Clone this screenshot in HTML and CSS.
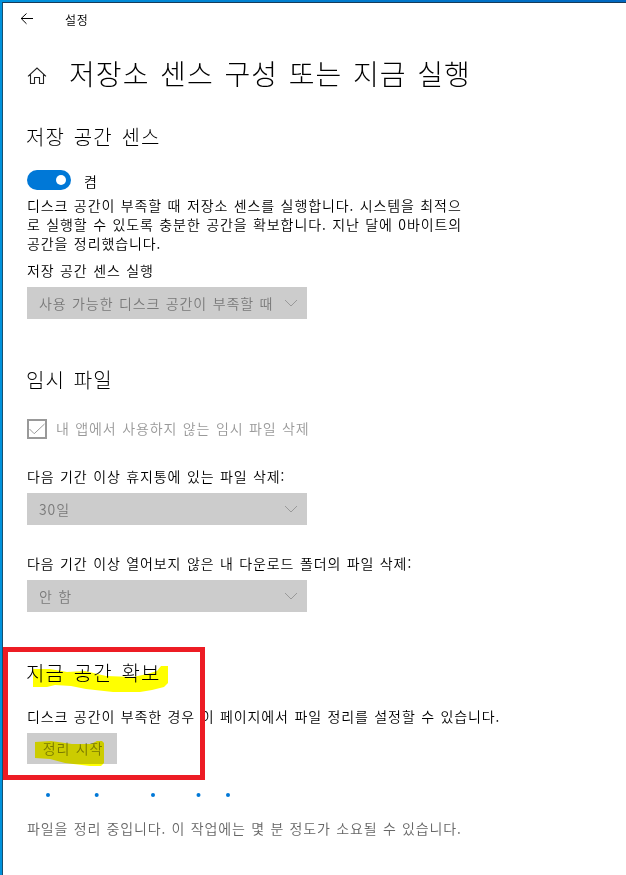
FILE: index.html
```
<!DOCTYPE html>
<html lang="ko">
	<head>
		<meta charset="UTF-8" />
		<meta name="viewport" content="width=device-width, initial-scale=1.0" />
		<title>설정</title>
		<link rel="stylesheet" href="styles.css">
	</head>
	<body>
		<div class="window">
			<header class="titlebar">
				<svg class="back" width="14" height="12" viewBox="0 0 14 12">
					<path d="M13 5.5H1M6.5 .5L1.2 5.5l5.3 5.3" />
				</svg>
				<span>설정</span>
			</header>

			<div class="page-title">
				<svg class="home" width="20" height="18" viewBox="0 0 20 18">
					<path d="M1 9.3L10 1l9 8.3M3.5 7.5v9h4v-6h5v6h4v-9" />
				</svg>
				<h1>저장소 센스 구성 또는 지금 실행</h1>
			</div>

			<main>
				<section class="sense">
					<h2>저장 공간 센스</h2>
					<div class="toggle-row">
						<span class="toggle"></span>
						<span>켬</span>
					</div>
					<p>디스크 공간이 부족할 때 저장소 센스를 실행합니다. 시스템을 최적으<br>로 실행할 수 있도록 충분한 공간을 확보합니다. 지난 달에 0바이트의<br>공간을 정리했습니다.</p>
					<div class="label">저장 공간 센스 실행</div>
					<div class="select">
						<span>사용 가능한 디스크 공간이 부족할 때</span>
						<svg width="14" height="8" viewBox="0 0 14 8"><path d="M1 1l6 6 6-6" /></svg>
					</div>
				</section>

				<section class="temp">
					<h2>임시 파일</h2>
					<div class="check-row">
						<svg width="20" height="20" viewBox="0 0 20 20">
							<rect x="1" y="1" width="18" height="18" stroke-width="2" />
							<path d="M2.5 10l4.7 4.7L17.5 5" />
						</svg>
						<span>내 앱에서 사용하지 않는 임시 파일 삭제</span>
					</div>
					<div class="label">다음 기간 이상 휴지통에 있는 파일 삭제:</div>
					<div class="select">
						<span>30일</span>
						<svg width="14" height="8" viewBox="0 0 14 8"><path d="M1 1l6 6 6-6" /></svg>
					</div>
					<div class="label downloads">다음 기간 이상 열어보지 않은 내 다운로드 폴더의 파일 삭제:</div>
					<div class="select">
						<span>안 함</span>
						<svg width="14" height="8" viewBox="0 0 14 8"><path d="M1 1l6 6 6-6" /></svg>
					</div>
				</section>

				<section class="cleanup">
					<h2>지금 공간 확보</h2>
					<p>디스크 공간이 부족한 경우 이 페이지에서 파일 정리를 설정할 수 있습니다.</p>
					<button disabled>정리 시작</button>
					<svg class="progress" width="210" height="6" viewBox="0 0 210 6">
						<circle cx="21" cy="3" r="2" />
						<circle cx="69.7" cy="3" r="2" />
						<circle cx="126" cy="3" r="2" />
						<circle cx="171.5" cy="3" r="2" />
						<circle cx="201" cy="3" r="2" />
					</svg>
					<p class="working">파일을 정리 중입니다. 이 작업에는 몇 분 정도가 소요될 수 있습니다.</p>

					<!-- marker strokes and frame over the section -->
					<svg class="marker" width="202" height="133" viewBox="0 0 202 133">
						<path d="M30 22L47 22 64 25 82 24 103 29 130 30 144 27 154 24 158 19 165 19V36L161 40 149 43 137 45H110L83 42 68 39 52 38 44 40H30z" />
						<path d="M32 95L48 94 69 97 88 97 94 94H99L101 96V116L98 119 87 119 62 116 47 112 32 111z" />
					</svg>
					<div class="frame"></div>
				</section>
			</main>
		</div>
	</body>
</html>
```
FILE: styles.css
```
:root {
	--accent: #0078d7;
	--disabled-bg: #cccccc;
	--disabled-text: #7a7a7a;
}

* {
	box-sizing: border-box;
}

body {
	margin: 0;
	height: 875px;
	padding: 2px 0 0 2px;
	overflow: hidden;
	background: linear-gradient(to right, #0092dc, #0067c0);
	color: #000;
	font-family: "Noto Sans CJK KR", sans-serif;
	font-size: 14px;
	font-weight: 350;
	line-height: 19px;
	letter-spacing: 0.9px;
	word-spacing: 0.7px;
}

.window {
	height: 873px;
	border-top: 1px solid #173b59;
	border-left: 1px solid #17506f;
	background: #fff;
}

h1,
h2,
p {
	margin: 0;
	white-space: nowrap;
}

h1,
h2 {
	font-weight: 300;
}

svg {
	display: block;
	fill: none;
	stroke: currentColor;
}

.titlebar {
	display: flex;
	align-items: center;
	gap: 31px;
	height: 32px;
	padding-left: 17px;
	font-size: 12px;
	letter-spacing: 0.7px;
}

.back {
	margin-top: -1px;
}

.page-title {
	display: flex;
	align-items: center;
	gap: 22px;
	height: 40px;
	margin-top: 18px;
	padding-left: 24px;
}

.home {
	margin-top: 5px;
	stroke: #222;
	stroke-width: 1.1;
}

h1 {
	font-size: 28px;
	line-height: 40px;
	letter-spacing: 1.1px;
	word-spacing: 1.6px;
}

main {
	padding: 30px 0 0 24px;
}

h2 {
	margin-left: -1px;
	font-size: 20px;
	line-height: 28px;
	letter-spacing: 1.2px;
	word-spacing: 1.7px;
}

.toggle-row {
	display: flex;
	gap: 13px;
	height: 20px;
	margin: 19px 0 6px;
	line-height: 22px;
}

.toggle {
	width: 44px;
	height: 20px;
	padding: 5px 5px 5px 29px;
	border-radius: 10px;
	background: var(--accent);
}

.toggle::after {
	content: "";
	display: block;
	width: 10px;
	height: 10px;
	border-radius: 50%;
	background: #fff;
}

.label {
	margin: 8px 0 7px;
}

.select {
	display: flex;
	align-items: center;
	justify-content: space-between;
	width: 280px;
	height: 32px;
	padding: 0 9px 0 12px;
	background: var(--disabled-bg);
	color: var(--disabled-text);
	white-space: nowrap;
}

.select svg {
	stroke: #999;
}

.temp {
	margin-top: 47px;
}

.check-row {
	display: flex;
	gap: 9px;
	height: 20px;
	margin: 25px 0 28px;
	color: #999;
}

.temp .downloads {
	margin-top: 29px;
}

.cleanup {
	position: relative;
	margin-top: 47px;
}

.cleanup h2 {
	margin-bottom: 20px;
}

.cleanup button {
	display: block;
	width: 90px;
	height: 31px;
	margin-top: 7px;
	padding: 0 0 0 2px;
	border: 0;
	background: var(--disabled-bg);
	color: var(--disabled-text);
	font: inherit;
	letter-spacing: inherit;
	word-spacing: inherit;
}

.progress {
	margin: 28px 0 21px;
	fill: var(--accent);
	stroke: none;
}

.working {
	color: #666;
	letter-spacing: 0.85px;
}

.marker,
.frame {
	position: absolute;
	top: -12px;
	left: -24px;
	width: 202px;
	height: 133px;
}

.marker {
	fill: #ff0;
	stroke: none;
	mix-blend-mode: multiply;
}

.frame {
	border: 5px solid #ed1c24;
}
```
